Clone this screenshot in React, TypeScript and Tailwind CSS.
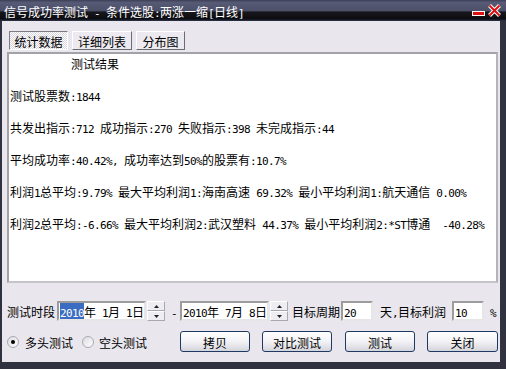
import React from 'react';

// ASCII runs are drawn narrower (half the width of a CJK glyph), like the old bitmap UI font
const Mix = ({ text, className = '' }: { text: string; className?: string }) => {
  const parts = text.split(/([\x20-\x7e]+)/).filter((p) => p.length > 0);
  return (
    <span className={`whitespace-pre ${className}`}>
      {parts.map((p, i) =>
        /^[\x20-\x7e]+$/.test(p) ? (
          <span key={i} className="font-['DejaVu_Sans_Mono',monospace] text-[11px] tracking-[-0.62px]">
            {p}
          </span>
        ) : (
          <span key={i} className="font-['Noto_Sans_CJK_SC',sans-serif] text-[12px]">
            {p}
          </span>
        )
      )}
    </span>
  );
};

const resultLines = [
  '测试股票数:1844',
  '共发出指示:712 成功指示:270 失败指示:398 未完成指示:44',
  '平均成功率:40.42%, 成功率达到50%的股票有:10.7%',
  '利润1总平均:9.79% 最大平均利润1:海南高速 69.32% 最小平均利润1:航天通信 0.00%',
  '利润2总平均:-6.66% 最大平均利润2:武汉塑料 44.37% 最小平均利润2:*ST博通  -40.28%',
];

const Spinner = () => (
  <div className="flex flex-col w-[18px] h-[20px] ml-[1px]">
    {[0, 1].map((i) => (
      <div
        key={i}
        className="flex-1 flex items-center justify-center bg-[#eeedf2] border border-t-white border-l-white border-b-[#a8a8b0] border-r-[#a8a8b0]"
      >
        <svg width="5" height="3" viewBox="0 0 5 3">
          {i === 0 ? <path d="M2.5 0 L5 3 L0 3 Z" fill="#222" /> : <path d="M0 0 L5 0 L2.5 3 Z" fill="#222" />}
        </svg>
      </div>
    ))}
  </div>
);

const Input = ({ children, w }: { children: React.ReactNode; w: string }) => (
  <div
    className={`${w} h-[20px] bg-white border-2 border-t-[#9c9c9c] border-l-[#9c9c9c] border-b-[#e6e6e6] border-r-[#e6e6e6] flex items-center pl-[1px] leading-none text-black`}
  >
    {children}
  </div>
);

const Btn = ({ label, w = 'w-[70px]' }: { label: string; w?: string }) => (
  <div
    className={`${w} h-[21px] rounded-[3px] border border-[#1f3a62] bg-gradient-to-b from-white via-[#f3f3f6] to-[#d4d4dc] flex items-center justify-center text-black`}
  >
    <Mix text={label} />
  </div>
);

const Radio = ({ checked }: { checked?: boolean }) => (
  <div className="w-[12px] h-[12px] rounded-full border border-[#a9a9b2] bg-gradient-to-br from-[#dcdce2] to-white flex items-center justify-center">
    {checked && <div className="w-[4px] h-[4px] rounded-full bg-black" />}
  </div>
);

const App = () => {
  return (
    <div className="w-[506px] h-[369px] flex flex-col bg-[#30333f] overflow-hidden">
      {/* Title bar */}
      <div className="h-[21px] flex items-center px-[4px] bg-[linear-gradient(to_bottom,#3c3f56_0%,#575a75_12%,#4d5069_50%,#16161c_58%,#0c0c10_90%,#2c3650_100%)]">
        <Mix text="信号成功率测试 - 条件选股:两涨一缩[日线]" className="text-white" />
        <div className="ml-auto flex items-end gap-[3px] mr-[1px]">
          <svg width="13" height="5" viewBox="0 0 13 5" className="mb-[1px]">
            <rect x="0.5" y="0.5" width="12" height="4" fill="#e01010" stroke="#fff" />
          </svg>
          <svg width="13" height="13" viewBox="0 0 13 13">
            <path d="M1.5 1.5 L11.5 11.5 M11.5 1.5 L1.5 11.5" stroke="#fff" strokeWidth="4" />
            <path d="M1.5 1.5 L11.5 11.5 M11.5 1.5 L1.5 11.5" stroke="#e01010" strokeWidth="2" />
          </svg>
        </div>
      </div>

      {/* Window body */}
      <div className="flex-1 ml-[2px] mr-[6px] mb-[7px] bg-[#e9e7ed] flex flex-col pl-[5px] pr-[2px] text-black">
        {/* Tabs */}
        <div className="flex mt-[10px] ml-[2px] h-[19px]">
          <div className="w-[59px] flex items-center justify-center border border-t-[#7c7c84] border-l-[#7c7c84] border-b-white border-r-white bg-[repeating-conic-gradient(#ffffff_0_25%,#d6d4dc_0_50%)] bg-[length:2px_2px]">
            <Mix text="统计数据" />
          </div>
          <div className="w-[60px] ml-[4px] flex items-center justify-center border border-t-white border-l-white border-b-[#6c6c74] border-r-[#6c6c74] bg-[#eceaf0]">
            <Mix text="详细列表" />
          </div>
          <div className="w-[49px] ml-[4px] flex items-center justify-center border border-t-white border-l-white border-b-[#6c6c74] border-r-[#6c6c74] bg-[#eceaf0]">
            <Mix text="分布图" />
          </div>
        </div>

        {/* Result area */}
        <div className="mt-[2px] h-[231px] bg-white border-2 border-t-[#a2a2a8] border-l-[#a2a2a8] border-b-[#c4c4ca] border-r-[#b4b4ba] flex flex-col gap-[16px] pt-[1px] pl-[1px]">
          <div className="h-[16px] flex items-center pl-[61px]">
            <Mix text="测试结果" />
          </div>
          {resultLines.map((line, i) => (
            <div key={i} className="h-[16px] flex items-center">
              <Mix text={line} />
            </div>
          ))}
        </div>

        {/* Period row */}
        <div className="mt-[18px] h-[20px] flex items-center">
          <Mix text="测试时段" />
          <div className="ml-[2px] flex">
            <Input w="w-[89px]">
              <span className="bg-[#3a6dc2] text-white">
                <Mix text="2010" />
              </span>
              <Mix text="年 1月 1日" />
            </Input>
            <Spinner />
          </div>
          <Mix text="-" className="ml-[6px]" />
          <div className="ml-[3px] flex">
            <Input w="w-[89px]">
              <Mix text="2010年 7月 8日" />
            </Input>
            <Spinner />
          </div>
          <Mix text="目标周期" className="ml-[4px]" />
          <div className="ml-[1px]">
            <Input w="w-[32px]">
              <Mix text="20" />
            </Input>
          </div>
          <Mix text="天,目标利润" className="ml-[7px]" />
          <div className="ml-[6px]">
            <Input w="w-[32px]">
              <Mix text="10" />
            </Input>
          </div>
          <Mix text="%" className="ml-[6px]" />
        </div>

        {/* Mode + buttons row */}
        <div className="mt-[10px] h-[21px] flex items-center">
          <Radio checked />
          <Mix text="多头测试" className="ml-[6px]" />
          <div className="ml-[9px]">
            <Radio />
          </div>
          <Mix text="空头测试" className="ml-[5px]" />
          <div className="ml-auto flex">
            <Btn label="拷贝" />
            <div className="ml-[12px]">
              <Btn label="对比测试" />
            </div>
            <div className="ml-[13px]">
              <Btn label="测试" />
            </div>
            <div className="ml-[12px]">
              <Btn label="关闭" w="w-[71px]" />
            </div>
          </div>
        </div>
      </div>
    </div>
  );
};

export default App;
